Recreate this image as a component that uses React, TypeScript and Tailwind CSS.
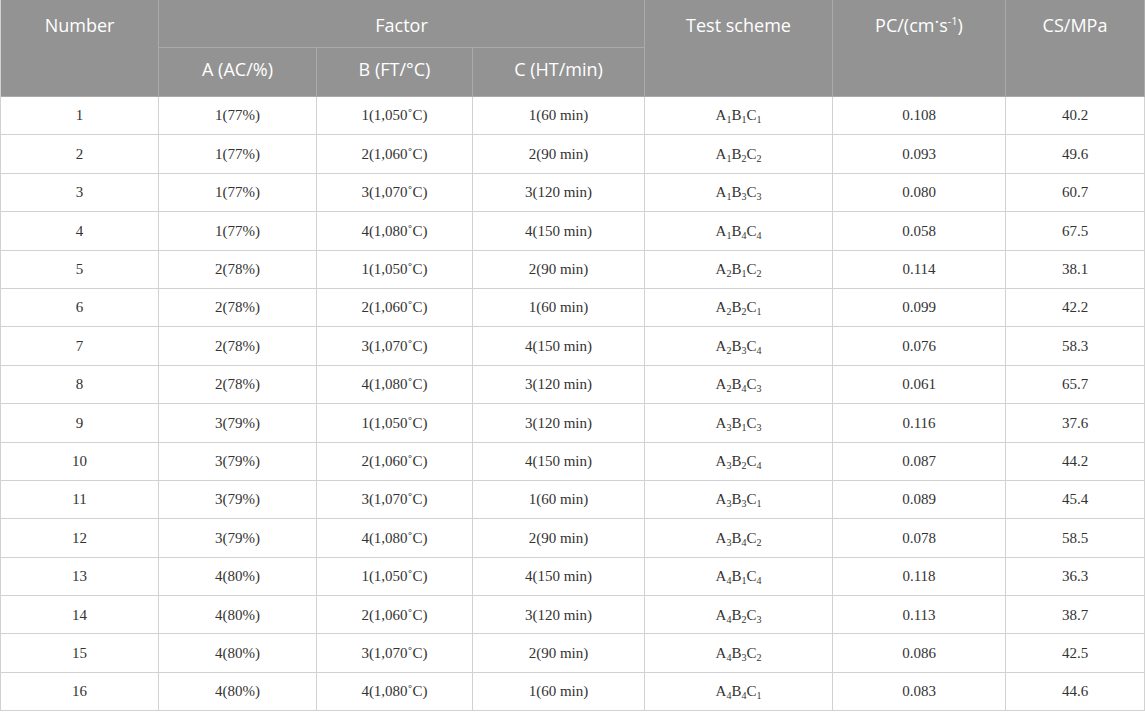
import React from "react";

type Row = [string, string, string, [number, number, number], string, string];

const rows: Row[] = [
  ["1(77%)", "1(1,050˚C)", "1(60 min)", [1, 1, 1], "0.108", "40.2"],
  ["1(77%)", "2(1,060˚C)", "2(90 min)", [1, 2, 2], "0.093", "49.6"],
  ["1(77%)", "3(1,070˚C)", "3(120 min)", [1, 3, 3], "0.080", "60.7"],
  ["1(77%)", "4(1,080˚C)", "4(150 min)", [1, 4, 4], "0.058", "67.5"],
  ["2(78%)", "1(1,050˚C)", "2(90 min)", [2, 1, 2], "0.114", "38.1"],
  ["2(78%)", "2(1,060˚C)", "1(60 min)", [2, 2, 1], "0.099", "42.2"],
  ["2(78%)", "3(1,070˚C)", "4(150 min)", [2, 3, 4], "0.076", "58.3"],
  ["2(78%)", "4(1,080˚C)", "3(120 min)", [2, 4, 3], "0.061", "65.7"],
  ["3(79%)", "1(1,050˚C)", "3(120 min)", [3, 1, 3], "0.116", "37.6"],
  ["3(79%)", "2(1,060˚C)", "4(150 min)", [3, 2, 4], "0.087", "44.2"],
  ["3(79%)", "3(1,070˚C)", "1(60 min)", [3, 3, 1], "0.089", "45.4"],
  ["3(79%)", "4(1,080˚C)", "2(90 min)", [3, 4, 2], "0.078", "58.5"],
  ["4(80%)", "1(1,050˚C)", "4(150 min)", [4, 1, 4], "0.118", "36.3"],
  ["4(80%)", "2(1,060˚C)", "3(120 min)", [4, 2, 3], "0.113", "38.7"],
  ["4(80%)", "3(1,070˚C)", "2(90 min)", [4, 3, 2], "0.086", "42.5"],
  ["4(80%)", "4(1,080˚C)", "1(60 min)", [4, 4, 1], "0.083", "44.6"],
];

const cols = "grid-cols-[158px_158px_156px_172px_188px_173px_139px]";

function Scheme({ s }: { s: [number, number, number] }) {
  const sub = "text-[10px] relative top-[3px] leading-none";
  return (
    <span>
      A<span className={sub}>{s[0]}</span>B<span className={sub}>{s[1]}</span>C
      <span className={sub}>{s[2]}</span>
    </span>
  );
}

export default function App() {
  const hc =
    "bg-[#939393] text-white border-r border-b border-[#aaaaaa] flex justify-center";
  const bc =
    "border-r border-b border-[#d2d2d2] flex items-center justify-center h-[38.4px]";
  return (
    <div className="w-[1145px] h-[712px] bg-white overflow-hidden">
      <div
        className={`grid ${cols} border-l border-[#d2d2d2] text-[18px] leading-[24px]`}
        style={{ fontFamily: '"Open Sans", "Noto Sans", sans-serif' }}
      >
        <div className={`${hc} row-span-2 pt-[13px]`}>Number</div>
        <div className={`${hc} col-span-3 h-[48px] pt-[13px]`}>Factor</div>
        <div className={`${hc} row-span-2 pt-[13px]`}>Test scheme</div>
        <div className={`${hc} row-span-2 pt-[13px]`}>
          <span>
            PC/(cm<span className="relative -top-[4px]">·</span>s
            <span className="text-[11px] relative -top-[7px]">-1</span>)
          </span>
        </div>
        <div className={`${hc} row-span-2 pt-[13px]`}>CS/MPa</div>
        <div className={`${hc} h-[49px] pt-[9px]`}>A (AC/%)</div>
        <div className={`${hc} h-[49px] pt-[9px]`}>B (FT/°C)</div>
        <div className={`${hc} h-[49px] pt-[9px]`}>C (HT/min)</div>
      </div>
      <div
        className={`grid ${cols} border-l border-[#d2d2d2] text-[15px] text-[#333333]`}
        style={{ fontFamily: '"Liberation Serif", "Times New Roman", serif' }}
      >
        {rows.map((r, i) => (
          <React.Fragment key={i}>
            <div className={bc}>{i + 1}</div>
            <div className={bc}>{r[0]}</div>
            <div className={bc}>{r[1]}</div>
            <div className={bc}>{r[2]}</div>
            <div className={bc}>
              <Scheme s={r[3]} />
            </div>
            <div className={bc}>{r[4]}</div>
            <div className={bc}>{r[5]}</div>
          </React.Fragment>
        ))}
      </div>
    </div>
  );
}
